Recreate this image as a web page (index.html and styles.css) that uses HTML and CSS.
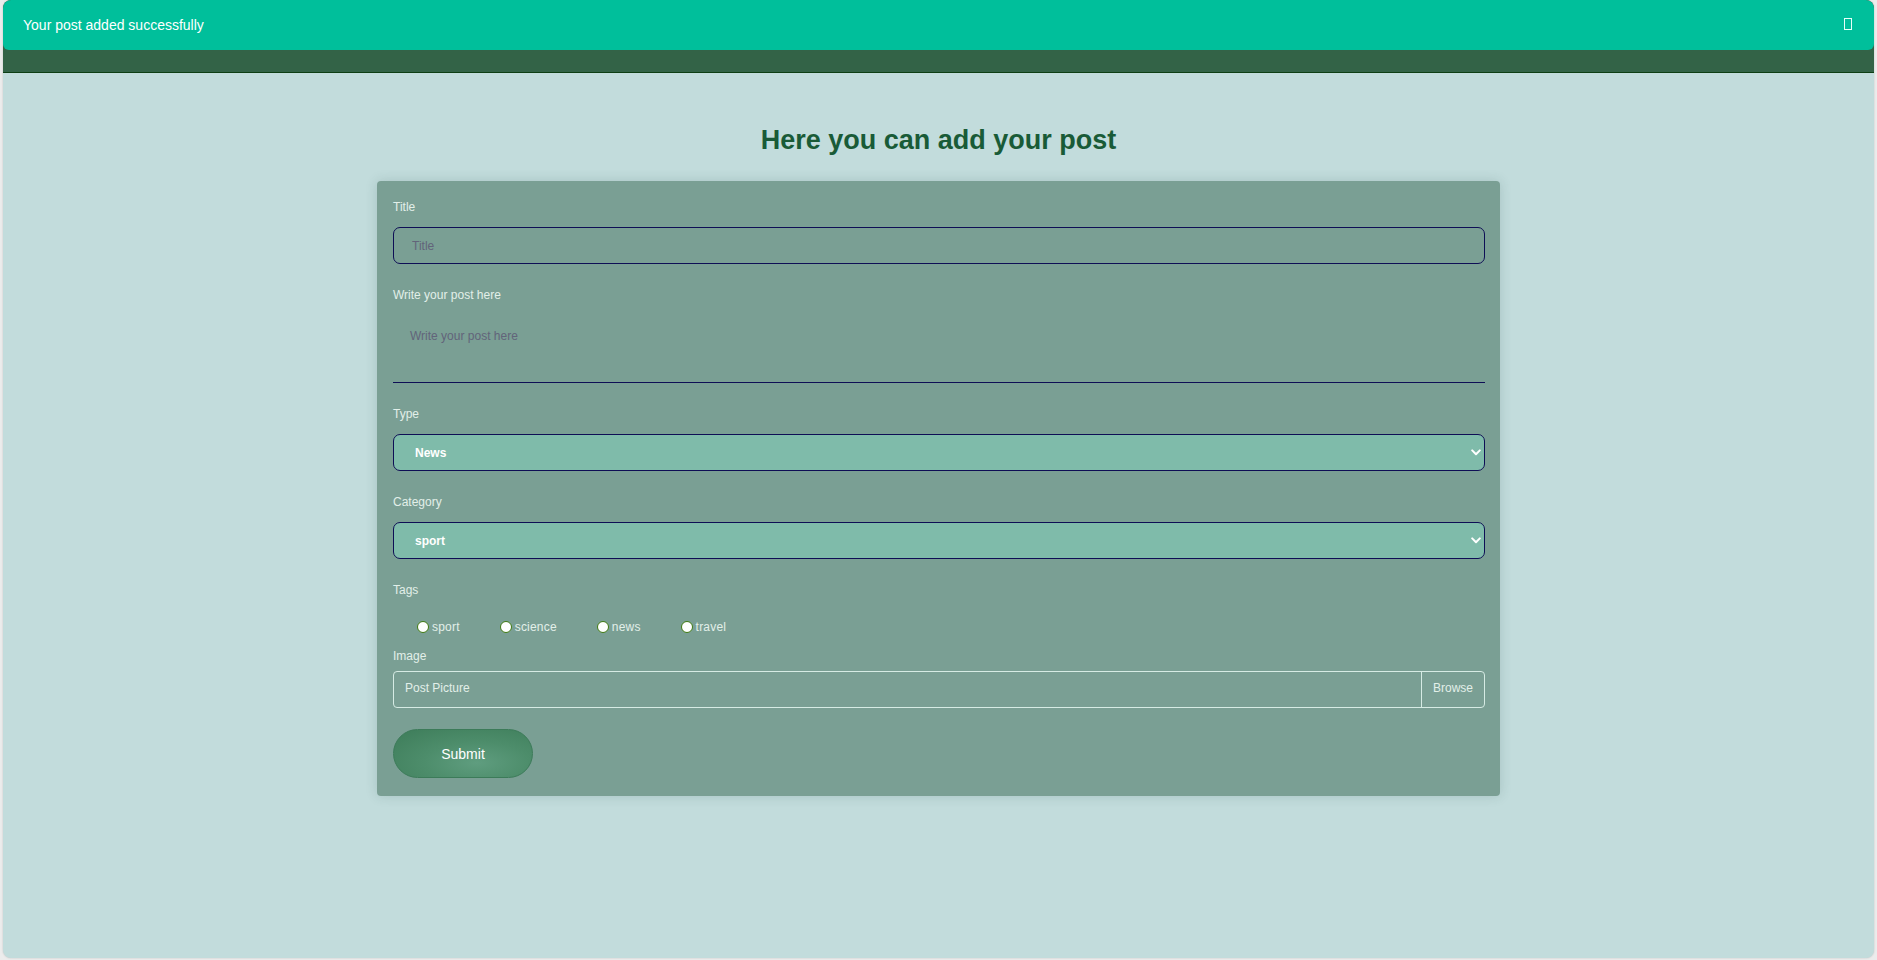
FILE: index.html
```html
<!DOCTYPE html>
<html lang="en">
<head>
<meta charset="utf-8">
<title>Add post</title>
<link rel="stylesheet" href="styles.css">
</head>
<body>
<div class="window">
  <header class="navbar"></header>
  <div class="toast">
    <span class="toast-text">Your post added successfully</span>
    <span class="toast-close" aria-label="close"></span>
  </div>
  <main class="page">
    <h2 class="page-title">Here you can add your post</h2>
    <form class="card">
      <div class="group group-title">
        <label class="lbl">Title</label>
        <input class="input" type="text" placeholder="Title">
      </div>
      <div class="group group-body">
        <label class="lbl">Write your post here</label>
        <textarea class="textarea" placeholder="Write your post here"></textarea>
      </div>
      <div class="group group-type">
        <label class="lbl">Type</label>
        <div class="select-wrap">
          <select class="select"><option>News</option></select>
          <svg class="chev" width="10" height="7" viewBox="0 0 10 7"><path d="M1.2 1.4 L5 5.2 L8.8 1.4" fill="none" stroke="#ffffff" stroke-width="2" stroke-linecap="round" stroke-linejoin="round"/></svg>
        </div>
      </div>
      <div class="group group-category">
        <label class="lbl">Category</label>
        <div class="select-wrap">
          <select class="select"><option>sport</option></select>
          <svg class="chev" width="10" height="7" viewBox="0 0 10 7"><path d="M1.2 1.4 L5 5.2 L8.8 1.4" fill="none" stroke="#ffffff" stroke-width="2" stroke-linecap="round" stroke-linejoin="round"/></svg>
        </div>
      </div>
      <div class="group group-tags">
        <label class="lbl">Tags</label>
        <div class="tags">
          <label class="tag"><input class="radio" type="radio" name="tag">sport</label>
          <label class="tag"><input class="radio" type="radio" name="tag">science</label>
          <label class="tag"><input class="radio" type="radio" name="tag">news</label>
          <label class="tag"><input class="radio" type="radio" name="tag">travel</label>
        </div>
      </div>
      <div class="group group-image">
        <label class="lbl lbl-tight">Image</label>
        <div class="file">
          <span class="file-name">Post Picture</span>
          <span class="file-btn">Browse</span>
        </div>
      </div>
      <button class="submit" type="button">Submit</button>
    </form>
  </main>
</div>
</body>
</html>
```

FILE: styles.css
```css
html, body {
  margin: 0;
  height: 100%;
}

body {
  background: #ececec;
  font-family: "Liberation Sans", Arial, sans-serif;
}

.window {
  position: relative;
  margin: 0 3px;
  height: 958px;
  background: #c2dcdc;
  border-radius: 8px;
  overflow: hidden;
  box-shadow: 0 0 2px rgba(0, 0, 0, 0.18);
}

.navbar {
  height: 72px;
  background: #336347;
  border-bottom: 1px solid #0d3f14;
}

.toast {
  position: absolute;
  top: 0;
  left: 0;
  right: 0;
  height: 50px;
  box-sizing: border-box;
  padding: 0 22px 0 20px;
  display: flex;
  align-items: center;
  justify-content: space-between;
  background: #00bf9b;
  border-radius: 8px 8px 6px 6px;
  color: #ffffff;
  font-size: 14px;
  line-height: 16px;
}

.toast-close {
  width: 6px;
  height: 10px;
  border: 1px solid #e8fff8;
  margin-top: -3px;
}

.page {
  display: flex;
  flex-direction: column;
  align-items: center;
  padding-top: 51px;
}

.page-title {
  margin: 0 0 25px;
  font-size: 27px;
  line-height: 32px;
  font-weight: bold;
  color: #195b37;
}

.card {
  width: 1123px;
  box-sizing: border-box;
  padding: 19px 15px 18px 16px;
  background: #7a9f94;
  border-radius: 4px;
  box-shadow: 0 0 12px rgba(40, 80, 70, 0.18);
  display: flex;
  flex-direction: column;
}

.group-body { margin-top: 24px; }
.group-type { margin-top: 24px; }
.group-category { margin-top: 24px; }
.group-tags { margin-top: 24px; }
.group-image { margin-top: 5px; }

.lbl {
  display: block;
  font-size: 12px;
  line-height: 14px;
  color: #e2efe9;
  margin-bottom: 13px;
}

.lbl-tight {
  margin-bottom: 8px;
}

.input {
  display: block;
  width: 100%;
  height: 37px;
  box-sizing: border-box;
  padding: 0 18px;
  border: 1px solid #0e0e55;
  border-radius: 7px;
  background: transparent;
  font-family: inherit;
  font-size: 12px;
  color: #222;
  outline: none;
}

.input::placeholder,
.textarea::placeholder {
  color: #62647a;
}

.textarea {
  display: block;
  width: 100%;
  height: 68px;
  box-sizing: border-box;
  padding: 14px 17px;
  border: none;
  border-bottom: 1px solid #0e0e55;
  background: transparent;
  font-family: inherit;
  font-size: 12px;
  line-height: 14px;
  resize: none;
  outline: none;
}

.select-wrap {
  position: relative;
}

.select {
  display: block;
  width: 100%;
  height: 37px;
  box-sizing: border-box;
  padding: 0 21px;
  -webkit-appearance: none;
  appearance: none;
  border: 1px solid #0e0e55;
  border-radius: 7px;
  background: #7fbbaa;
  font-family: inherit;
  font-size: 12px;
  font-weight: bold;
  color: #ffffff;
  outline: none;
}

.chev {
  position: absolute;
  right: 4px;
  top: 15px;
}

.tags {
  height: 34px;
  display: flex;
  align-items: center;
  gap: 40px;
  padding-left: 24px;
}

.tag {
  display: flex;
  align-items: center;
  font-size: 12px;
  line-height: 14px;
  letter-spacing: 0.2px;
  color: #e2efe9;
}

.radio {
  -webkit-appearance: none;
  appearance: none;
  width: 12px;
  height: 12px;
  box-sizing: border-box;
  margin: 0 3px 0 0;
  border: 1px solid #3f7a12;
  border-radius: 50%;
  background: #ffffff;
}

.file {
  display: flex;
  height: 37px;
  box-sizing: border-box;
  border: 1px solid #d6ebe4;
  border-radius: 4px;
  font-size: 12px;
  color: #e2efe9;
}

.file-name {
  flex: 1;
  display: flex;
  align-items: center;
  padding: 0 0 3px 11px;
}

.file-btn {
  display: flex;
  align-items: center;
  padding: 0 11px 3px 11px;
  border-left: 1px solid #d6ebe4;
}

.submit {
  margin-top: 21px;
  width: 140px;
  height: 49px;
  border: 1px solid #3c7b59;
  border-radius: 25px;
  background: radial-gradient(ellipse at 60% 70%, #5f9d7f 0%, #4d8d6b 45%, #3d7c59 100%);
  color: #ffffff;
  font-family: inherit;
  font-size: 14px;
  cursor: pointer;
}
```
